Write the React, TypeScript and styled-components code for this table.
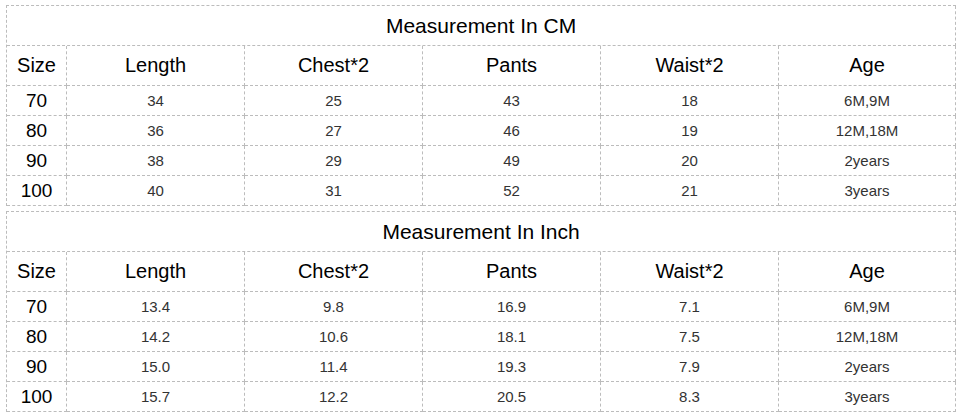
import React from 'react';
import styled, { createGlobalStyle } from 'styled-components';

const GlobalStyle = createGlobalStyle`
  html, body {
    margin: 0;
    padding: 0;
    background: #fff;
  }
  body {
    font-family: "Liberation Sans", Arial, sans-serif;
  }
`;

const Page = styled.div`
  display: flex;
  flex-direction: column;
  gap: 5px;
  padding: 5px 0 0 6px;
`;

const Table = styled.table`
  width: 950px;
  table-layout: fixed;
  border-collapse: separate;
  border-spacing: 0;
  border-top: 1px dashed #bcbcbc;
  border-left: 1px dashed #bcbcbc;
`;

const Cell = styled.td<{ $kind: 'title' | 'head' | 'size' | 'data' }>`
  box-sizing: border-box;
  padding: 0;
  text-align: center;
  vertical-align: middle;
  border-right: 1px dashed #bcbcbc;
  border-bottom: 1px dashed #bcbcbc;
  white-space: nowrap;
  height: ${(p) => (p.$kind === 'title' || p.$kind === 'head' ? '40px' : '30px')};
  font-size: ${(p) =>
    p.$kind === 'data' ? '15px' : p.$kind === 'size' ? '19px' : p.$kind === 'title' ? '21px' : '20px'};
  color: ${(p) => (p.$kind === 'data' ? '#333' : '#000')};
`;

const columns = ['Size', 'Length', 'Chest*2', 'Pants', 'Waist*2', 'Age'];
const widths = [60, 178, 178, 178, 178, 177];

const cmRows = [
  ['70', '34', '25', '43', '18', '6M,9M'],
  ['80', '36', '27', '46', '19', '12M,18M'],
  ['90', '38', '29', '49', '20', '2years'],
  ['100', '40', '31', '52', '21', '3years'],
];

const inchRows = [
  ['70', '13.4', '9.8', '16.9', '7.1', '6M,9M'],
  ['80', '14.2', '10.6', '18.1', '7.5', '12M,18M'],
  ['90', '15.0', '11.4', '19.3', '7.9', '2years'],
  ['100', '15.7', '12.2', '20.5', '8.3', '3years'],
];

const SizeTable: React.FC<{ title: string; rows: string[][] }> = ({ title, rows }) => (
  <Table>
    <colgroup>
      {widths.map((w, i) => (
        <col key={i} style={{ width: w }} />
      ))}
    </colgroup>
    <tbody>
      <tr>
        <Cell $kind="title" colSpan={6}>
          {title}
        </Cell>
      </tr>
      <tr>
        {columns.map((c) => (
          <Cell $kind="head" key={c}>
            {c}
          </Cell>
        ))}
      </tr>
      {rows.map((r) => (
        <tr key={r[0]}>
          {r.map((v, i) => (
            <Cell $kind={i === 0 ? 'size' : 'data'} key={i}>
              {v}
            </Cell>
          ))}
        </tr>
      ))}
    </tbody>
  </Table>
);

export default function App() {
  return (
    <>
      <GlobalStyle />
      <Page>
        <SizeTable title="Measurement In CM" rows={cmRows} />
        <SizeTable title="Measurement In Inch" rows={inchRows} />
      </Page>
    </>
  );
}
